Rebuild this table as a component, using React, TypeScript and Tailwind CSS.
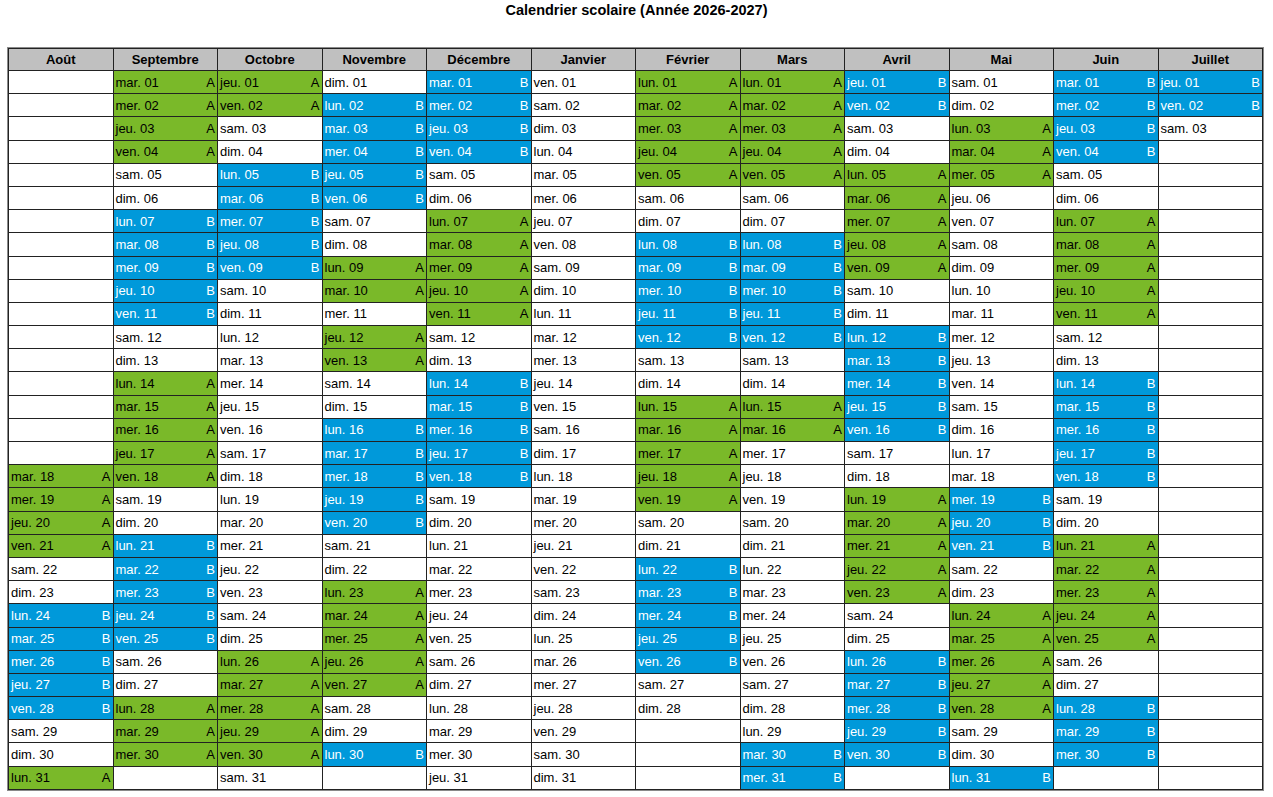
const DAYS = ["dim.", "lun.", "mar.", "mer.", "jeu.", "ven.", "sam."];

type Month = { name: string; y: number; m: number; s: string };

// one char per day: A / B = week colour, "-" = no school, "x" = not shown
const MONTHS: Month[] = [
  { name: "Août", y: 2026, m: 7, s: "x".repeat(17) + "AAAA--BBBBB--A" },
  { name: "Septembre", y: 2026, m: 8, s: "AAAA--BBBBB--AAAAA--BBBBB--AAA" },
  { name: "Octobre", y: 2026, m: 9, s: "AA--BBBBB" + "-".repeat(16) + "AAAAA-" },
  { name: "Novembre", y: 2026, m: 10, s: "-BBBBB--AA-AA--BBBBB--AAAAA--B" },
  { name: "Décembre", y: 2026, m: 11, s: "BBBB--AAAAA--BBBBB" + "-".repeat(13) },
  { name: "Janvier", y: 2027, m: 0, s: "-".repeat(31) },
  { name: "Février", y: 2027, m: 1, s: "AAAAA--BBBBB--AAAAA--BBBBB--" },
  { name: "Mars", y: 2027, m: 2, s: "AAAAA--BBBBB--AA" + "-".repeat(13) + "BB" },
  { name: "Avril", y: 2027, m: 3, s: "BB--AAAAA--BBBBB--AAAAA--BBBBB" },
  { name: "Mai", y: 2027, m: 4, s: "--AAA" + "-".repeat(13) + "BBB--AAAAA--B" },
  { name: "Juin", y: 2027, m: 5, s: "BBBB--AAAAA--BBBBB--AAAAA--BBB" },
  { name: "Juillet", y: 2027, m: 6, s: "BB-" },
];

function Cell({ month, day }: { month: Month; day: number }) {
  const c = month.s[day - 1];
  if (!c || c === "x") {
    return <div className="h-[23.2px] border-r border-b border-[#222] bg-white" />;
  }
  const label = `${DAYS[new Date(month.y, month.m, day).getDay()]} ${String(day).padStart(2, "0")}`;
  const bg =
    c === "A" ? "bg-[#7ab929] text-black" : c === "B" ? "bg-[#0099da] text-white" : "bg-white text-black";
  return (
    <div className={`h-[23.2px] border-r border-b border-[#222] flex items-center justify-between pl-[2px] pr-[2px] ${bg}`}>
      <span>{label}</span>
      {c !== "-" && <span>{c}</span>}
    </div>
  );
}

export default function App() {
  const rows = Array.from({ length: 31 }, (_, i) => i + 1);
  return (
    <div className="w-[1273px] h-[797px] bg-white text-black overflow-hidden" style={{ fontFamily: '"Liberation Sans", Arial, sans-serif' }}>
      <h1 className="pt-[2px] text-center text-[14.5px] leading-[16px] font-bold">
        Calendrier scolaire (Année 2026-2027)
      </h1>
      <div className="ml-[7px] mt-[29px] w-[1257px] border border-[#8a8a8a]">
        <div className="grid grid-cols-12 border-l border-t border-[#222] text-[13px] leading-[15px]">
          {MONTHS.map((m) => (
            <div
              key={m.name}
              className="h-[22px] border-r border-b border-[#222] bg-[#c0c0c0] flex items-center justify-center font-bold"
            >
              {m.name}
            </div>
          ))}
          {rows.map((d) => MONTHS.map((m) => <Cell key={m.name + d} month={m} day={d} />))}
        </div>
      </div>
    </div>
  );
}
